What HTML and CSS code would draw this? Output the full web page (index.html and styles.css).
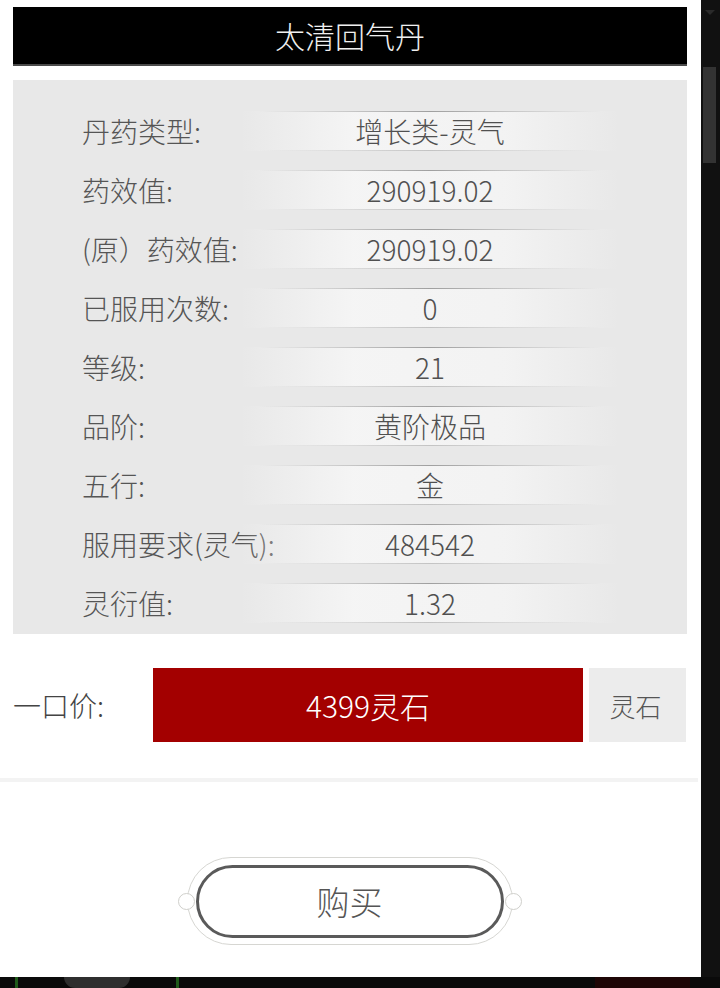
FILE: index.html
```html
<!DOCTYPE html>
<html lang="zh-CN">
<head>
<meta charset="utf-8">
<title>太清回气丹</title>
<link rel="stylesheet" href="styles.css">
</head>
<body>
<div class="screen">
  <div class="top">
    <main class="panel">
      <header class="title-bar"><h1 class="title">太清回气丹</h1></header>
      <section class="info">
        <div class="row"><span class="label">丹药类型:</span><span class="cell">增长类-灵气</span></div>
        <div class="row"><span class="label">药效值:</span><span class="cell">290919.02</span></div>
        <div class="row"><span class="label">(原）药效值:</span><span class="cell">290919.02</span></div>
        <div class="row"><span class="label">已服用次数:</span><span class="cell">0</span></div>
        <div class="row"><span class="label">等级:</span><span class="cell">21</span></div>
        <div class="row"><span class="label">品阶:</span><span class="cell">黄阶极品</span></div>
        <div class="row"><span class="label">五行:</span><span class="cell">金</span></div>
        <div class="row"><span class="label">服用要求(灵气):</span><span class="cell">484542</span></div>
        <div class="row"><span class="label">灵衍值:</span><span class="cell">1.32</span></div>
      </section>
      <section class="price">
        <span class="price-label">一口价:</span>
        <span class="price-value">4399灵石</span>
        <span class="price-unit">灵石</span>
      </section>
      <div class="divider"></div>
      <div class="buy-wrap">
        <div class="buy-frame">
          <span class="knob knob-left"></span>
          <button class="buy-btn">购买</button>
          <span class="knob knob-right"></span>
        </div>
      </div>
    </main>
    <aside class="gutter">
      <span class="arrow"></span>
      <span class="thumb"></span>
    </aside>
  </div>
  <footer class="bottom-strip">
    <span class="green-line g1"></span>
    <span class="blob"></span>
    <span class="green-line g2"></span>
    <span class="red-tag"></span>
  </footer>
</div>
</body>
</html>
```

FILE: styles.css
```css
* { box-sizing: border-box; }
html, body {
  margin: 0;
  padding: 0;
  background: #0d0d0d;
  font-family: "Noto Sans CJK SC", "Noto Sans", sans-serif;
  font-weight: 300;
}
.screen {
  width: 720px;
  height: 988px;
  display: flex;
  flex-direction: column;
  overflow: hidden;
}
.top {
  display: flex;
  height: 977px;
}
.panel {
  width: 701px;
  height: 977px;
  background: #fff;
  display: flex;
  flex-direction: column;
  padding-top: 7px;
}
.title-bar {
  margin: 0 14px 0 13px;
  height: 59px;
  background: #000;
  border-bottom: 2px solid #4a4a4a;
  display: flex;
  align-items: center;
  justify-content: center;
}
.title {
  margin: 0;
  font-size: 30px;
  font-weight: 300;
  color: #f0f0f0;
  line-height: 1;
  padding-bottom: 1px;
}
.info {
  margin: 14px 14px 0 13px;
  background: #e8e8e8;
  padding: 31px 0 11px 69px;
  display: flex;
  flex-direction: column;
  gap: 19px;
}
.row {
  display: flex;
  align-items: center;
  height: 40px;
}
.label {
  width: 158px;
  flex: none;
  font-size: 28px;
  color: #555;
  white-space: nowrap;
  line-height: 40px;
}
.cell {
  width: 380px;
  height: 40px;
  display: flex;
  align-items: center;
  justify-content: center;
  font-size: 28px;
  color: #505050;
  line-height: 40px;
  background:
    linear-gradient(to right, rgba(150,150,150,0) 5%, rgba(150,150,150,0.9) 50%, rgba(150,150,150,0) 95%) top / 100% 1px no-repeat,
    linear-gradient(to right, rgba(190,190,190,0) 5%, rgba(190,190,190,0.9) 50%, rgba(190,190,190,0) 95%) bottom / 100% 1px no-repeat,
    linear-gradient(to right, rgba(246,246,246,0) 0%, rgba(246,246,246,0.9) 30%, rgba(244,244,244,0.9) 70%, rgba(246,246,246,0) 100%);
}
.price {
  display: flex;
  align-items: center;
  margin: 34px 15px 0 13px;
  height: 74px;
}
.price-label {
  width: 140px;
  flex: none;
  font-size: 28px;
  color: #444;
}
.price-value {
  width: 430px;
  height: 74px;
  flex: none;
  background: #a30000;
  color: #fff;
  font-size: 30px;
  display: flex;
  align-items: center;
  justify-content: center;
}
.price-unit {
  margin-left: 6px;
  flex: 1;
  height: 74px;
  background: #ececec;
  color: #555;
  font-size: 26px;
  display: flex;
  align-items: center;
  justify-content: center;
  padding-right: 4px;
}
.divider {
  margin-top: 36px;
  height: 4px;
  margin-right: 3px;
  background: #f3f3f3;
}
.buy-wrap {
  display: flex;
  justify-content: center;
  padding-top: 75px;
  padding-right: 2px;
}
.buy-frame {
  position: relative;
  width: 326px;
  height: 88px;
  border: 1.5px solid #d6d6d2;
  border-radius: 44px;
  display: flex;
  align-items: center;
  justify-content: center;
}
.buy-btn {
  width: 308px;
  height: 73px;
  border: 3px solid #5a5a5a;
  border-radius: 37px;
  background: #fff;
  color: #555;
  font-family: "Noto Sans CJK SC", sans-serif;
  font-weight: 300;
  font-size: 33px;
  padding: 0;
  line-height: 1;
}
.knob {
  position: absolute;
  top: 50%;
  width: 17px;
  height: 17px;
  margin-top: -8.5px;
  border-radius: 50%;
  background: #fff;
  border: 1.5px solid #cfcfcb;
}
.knob-left { left: -10px; }
.knob-right { right: -10px; }
.gutter {
  position: relative;
  width: 19px;
  background: #111;
}
.arrow {
  position: absolute;
  left: 4px;
  top: 10px;
  width: 0;
  height: 0;
  border-left: 5px solid transparent;
  border-right: 5px solid transparent;
  border-top: 5px solid #2a2a2a;
}
.thumb {
  position: absolute;
  left: 2px;
  top: 67px;
  width: 13px;
  height: 96px;
  background: #333;
}
.bottom-strip {
  position: relative;
  height: 11px;
  background: #0a0a0a;
}
.green-line {
  position: absolute;
  top: 0;
  width: 3px;
  height: 11px;
  background: #1f5a1a;
}
.g1 { left: 15px; }
.g2 { left: 176px; }
.blob {
  position: absolute;
  left: 64px;
  top: 0;
  width: 66px;
  height: 11px;
  background: #2e2e2e;
  border-radius: 0 0 20px 20px;
}
.red-tag {
  position: absolute;
  left: 595px;
  top: 0;
  width: 95px;
  height: 11px;
  background: #1e0606;
}
```
